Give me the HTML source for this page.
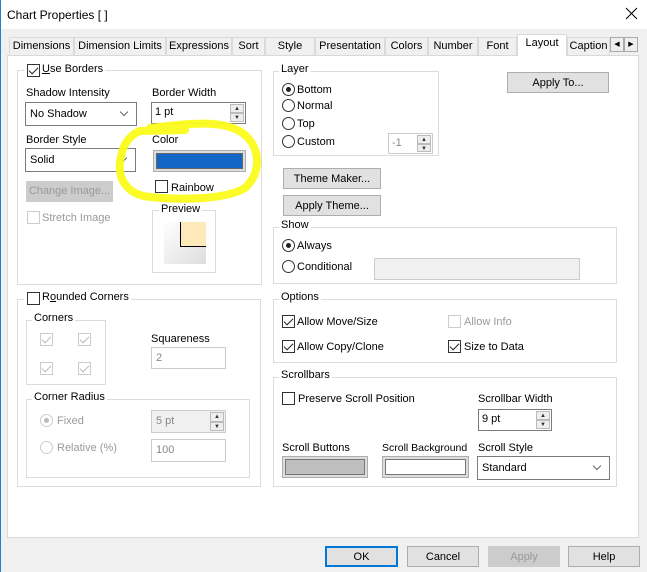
<!DOCTYPE html>
<html><head><meta charset="utf-8"><style>
*{box-sizing:border-box;margin:0;padding:0}
body{width:647px;height:572px;background:#f0f0f0;font-family:"Liberation Sans",sans-serif;font-size:11px;color:#000;position:relative;overflow:hidden}
.a{position:absolute;white-space:nowrap}
.t{padding-top:2px}
.grp{position:absolute;border:1px solid #dcdcdc}
.lg{position:absolute;background:#fff;padding:0 2px;line-height:13px}
.cb{position:absolute;width:13px;height:13px;border:1px solid #333;background:#fff}
.cb.c::after{content:"";position:absolute;left:3px;top:0px;width:4px;height:8px;border:solid #222;border-width:0 1.2px 1.2px 0;transform:rotate(45deg)}
.cb.d{border-color:#ccc}.cb.d.c::after{border-color:#bbb}
.rd{position:absolute;width:13px;height:13px;border:1px solid #333;border-radius:50%;background:#fff}
.rd.s::after{content:"";position:absolute;left:3px;top:3px;width:5px;height:5px;border-radius:50%;background:#222}
.rd.d{border-color:#ccc}.rd.d.s::after{background:#bbb}
.in{position:absolute;border:1px solid #7a7a7a;background:#fff;padding:3px 4px;line-height:14px;white-space:nowrap}
.in.d{border-color:#ccc;color:#888}
.btn{position:absolute;border:1px solid #adadad;background:#e1e1e1;text-align:center;line-height:19px;white-space:nowrap}
.chev{position:absolute;right:9px;top:6px;width:6px;height:6px;border:solid #666;border-width:0 1px 1px 0;transform:rotate(45deg)}
.spin{position:absolute;right:1px;top:1px;width:14px;bottom:1px;}
.spin i{position:absolute;left:0;width:14px;height:50%;border:1px solid #bbb;background:#eee;font-size:6px;font-style:normal;text-align:center;line-height:8px;color:#333}
.gr{color:#999}
.tab{position:absolute;top:37px;height:18px;border:1px solid #dadada;border-bottom:none;background:#f0f0f0;line-height:17px;text-align:center;font-size:11px;white-space:nowrap}
</style></head><body>
<div class="a" style="left:0;top:0;width:647px;height:29px;background:#fff"></div>
<div class="a" style="left:0;top:0;width:1px;height:572px;background:#2b7bd0"></div>
<div class="a" style="left:7px;top:8px;font-size:12px">Chart Properties [ ]</div>
<svg class="a" style="left:625px;top:7px" width="13" height="13"><path d="M1,1L12,12M12,1L1,12" stroke="#000" stroke-width="1"/></svg>

<div class="tab" style="left:9px;width:65px">Dimensions</div>
<div class="tab" style="left:74px;width:92px">Dimension Limits</div>
<div class="tab" style="left:166px;width:66px">Expressions</div>
<div class="tab" style="left:232px;width:33px">Sort</div>
<div class="tab" style="left:265px;width:50px">Style</div>
<div class="tab" style="left:315px;width:70px">Presentation</div>
<div class="tab" style="left:385px;width:43px">Colors</div>
<div class="tab" style="left:428px;width:50px">Number</div>
<div class="tab" style="left:478px;width:39px">Font</div>
<div class="tab" style="left:517px;top:34px;height:22px;width:50px;background:#fff;z-index:2">Layout</div>
<div class="tab" style="left:567px;width:43px">Caption</div>
<div class="a" style="left:610px;top:37px;width:14px;height:15px;border:1px solid #aaa;background:#eee;font-size:7px;text-align:center;line-height:13px">◀</div>
<div class="a" style="left:624px;top:37px;width:14px;height:15px;border:1px solid #aaa;background:#eee;font-size:7px;text-align:center;line-height:13px">▶</div>

<div class="a" style="left:7px;top:55px;width:632px;height:483px;background:#fff;border:1px solid #d9d9d9"></div>

<!-- Use Borders -->
<div class="grp" style="left:17px;top:70px;width:245px;height:215px"></div>
<div class="lg t" style="left:24px;top:63px;padding-left:18px"><u>U</u>se Borders</div>
<div class="cb c" style="left:27px;top:64px"></div>
<div class="a t" style="left:26px;top:85px">Shadow Intensity</div>
<div class="in" style="left:25px;top:102px;width:112px;height:24px;line-height:17px">No Shadow<span class="chev"></span></div>
<div class="a t" style="left:152px;top:85px">Border Width</div>
<div class="in" style="left:151px;top:102px;width:95px;height:22px;padding:2px 3px">1 pt<span class="spin"><i style="top:0">▲</i><i style="bottom:0">▼</i></span></div>
<div class="a t" style="left:26px;top:132px">Border Style</div>
<div class="in" style="left:25px;top:148px;width:111px;height:24px;line-height:17px">Solid<span class="chev"></span></div>
<div class="a" style="left:153px;top:150px;width:93px;height:22px;border:1px solid #adadad;background:#ddd;padding:2px"><div style="width:100%;height:100%;background:#1466c6;border:1px solid #666"></div></div>
<div class="btn gr" style="left:26px;top:181px;width:87px;height:21px;background:#ccc;border-color:#ccc">Change Image...</div>
<div class="cb d" style="left:27px;top:211px"></div>
<div class="a gr t" style="left:42px;top:210px">Stretch Image</div>
<div class="grp" style="left:152px;top:210px;width:64px;height:63px"></div>
<div class="lg t" style="left:159px;top:203px">Preview</div>
<div class="a" style="left:164px;top:222px;width:42px;height:42px;background:linear-gradient(135deg,#fff 0%,#ddd 100%)"></div>
<div class="a" style="left:180px;top:222px;width:26px;height:25px;background:#fde9b9;border-left:1px solid #000;border-bottom:1px solid #000"></div>

<!-- Rounded -->
<div class="grp" style="left:17px;top:299px;width:244px;height:188px"></div>
<div class="lg t" style="left:24px;top:291px;padding-left:18px">R<u>o</u>unded Corners</div>
<div class="cb" style="left:27px;top:292px"></div>
<div class="grp" style="left:26px;top:320px;width:80px;height:65px"></div>
<div class="lg t" style="left:32px;top:312px">Corners</div>
<div class="cb d c" style="left:40px;top:333px"></div><div class="cb d c" style="left:78px;top:333px"></div>
<div class="cb d c" style="left:40px;top:362px"></div><div class="cb d c" style="left:78px;top:362px"></div>
<div class="a t" style="left:151px;top:331px">Squareness</div>
<div class="in d" style="left:151px;top:347px;width:75px;height:22px">2</div>
<div class="grp" style="left:26px;top:399px;width:224px;height:79px"></div>
<div class="lg t" style="left:32px;top:391px">Corner Radius</div>
<div class="rd d s" style="left:40px;top:414px"></div><div class="a gr t" style="left:57px;top:413px">Fixed</div>
<div class="rd d" style="left:40px;top:441px"></div><div class="a gr t" style="left:57px;top:440px">Relative (%)</div>
<div class="in d" style="left:151px;top:410px;width:75px;height:23px;background:#f0f0f0">5 pt<span class="spin"><i style="top:0">▲</i><i style="bottom:0">▼</i></span></div>
<div class="in d" style="left:151px;top:439px;width:75px;height:23px">100</div>

<!-- Layer -->
<div class="grp" style="left:273px;top:71px;width:166px;height:85px"></div>
<div class="lg t" style="left:279px;top:63px">Layer</div>
<div class="rd s" style="left:282px;top:83px"></div><div class="a t" style="left:297px;top:82px">Bottom</div>
<div class="rd" style="left:282px;top:99px"></div><div class="a t" style="left:297px;top:98px">Normal</div>
<div class="rd" style="left:282px;top:117px"></div><div class="a t" style="left:297px;top:116px">Top</div>
<div class="rd" style="left:282px;top:135px"></div><div class="a t" style="left:297px;top:134px">Custom</div>
<div class="in d" style="left:388px;top:133px;width:45px;height:21px;padding:2px 3px">-1<span class="spin"><i style="top:0">▲</i><i style="bottom:0">▼</i></span></div>
<div class="btn" style="left:507px;top:72px;width:102px;height:21px;line-height:20px">Apply To...</div>
<div class="btn" style="left:283px;top:168px;width:98px;height:21px;line-height:20px">Theme Maker...</div>
<div class="btn" style="left:283px;top:195px;width:98px;height:21px;line-height:20px">Apply Theme...</div>

<div class="grp" style="left:273px;top:227px;width:344px;height:57px"></div>
<div class="lg t" style="left:279px;top:219px">Show</div>
<div class="rd s" style="left:282px;top:239px"></div><div class="a t" style="left:297px;top:238px">Always</div>
<div class="rd" style="left:282px;top:260px"></div><div class="a t" style="left:297px;top:259px">Conditional</div>
<div class="a" style="left:374px;top:258px;width:206px;height:22px;background:#f0f0f0;border:1px solid #ccc"></div>

<div class="grp" style="left:273px;top:299px;width:344px;height:64px"></div>
<div class="lg t" style="left:279px;top:291px">Options</div>
<div class="cb c" style="left:282px;top:315px"></div><div class="a t" style="left:297px;top:314px">Allow Move/Size</div>
<div class="cb c" style="left:282px;top:340px"></div><div class="a t" style="left:297px;top:339px">Allow Copy/Clone</div>
<div class="cb d" style="left:448px;top:315px"></div><div class="a gr t" style="left:464px;top:314px">Allow Info</div>
<div class="cb c" style="left:448px;top:340px"></div><div class="a t" style="left:464px;top:339px">Size to Data</div>

<div class="grp" style="left:273px;top:377px;width:344px;height:110px"></div>
<div class="lg t" style="left:279px;top:369px">Scrollbars</div>
<div class="cb" style="left:282px;top:392px"></div><div class="a t" style="left:298px;top:391px">Preserve Scroll Position</div>
<div class="a t" style="left:478px;top:391px">Scrollbar Width</div>
<div class="in" style="left:478px;top:409px;width:74px;height:22px;padding:2px 3px">9 pt<span class="spin"><i style="top:0">▲</i><i style="bottom:0">▼</i></span></div>
<div class="a t" style="left:282px;top:440px">Scroll Buttons</div>
<div class="a t" style="left:382px;top:440px;font-size:10.5px">Scroll Background</div>
<div class="a t" style="left:478px;top:440px">Scroll Style</div>
<div class="a" style="left:282px;top:456px;width:86px;height:22px;border:1px solid #adadad;background:#ddd;padding:2px"><div style="width:100%;height:100%;background:#bfbfbf;border:1px solid #777"></div></div>
<div class="a" style="left:382px;top:456px;width:87px;height:22px;border:1px solid #adadad;background:#ddd;padding:2px"><div style="width:100%;height:100%;background:#fff;border:1px solid #777"></div></div>
<div class="in" style="left:477px;top:456px;width:133px;height:24px;line-height:17px">Standard<span class="chev"></span></div>

<div class="btn" style="left:325px;top:546px;width:73px;height:21px;border:2px solid #0078d7;line-height:18px">OK</div>
<div class="btn" style="left:407px;top:546px;width:72px;height:21px;line-height:20px">Cancel</div>
<div class="btn gr" style="left:488px;top:546px;width:72px;height:21px;line-height:20px;background:#ccc;border-color:#ccc">Apply</div>
<div class="btn" style="left:568px;top:546px;width:72px;height:21px;line-height:20px">Help</div>

<svg class="a" style="left:0;top:0" width="647" height="572"><path d="M150,128 C185,124 225,118 245,135 C262,150 260,175 245,188 C225,200 180,200 150,197 C128,195 118,180 120,162 C122,146 128,136 140,131 L185,130" fill="none" stroke="#fbfb1c" stroke-width="8" stroke-linecap="round" opacity="0.95"/></svg>
<div class="a t" style="left:152px;top:132px;z-index:3">Color</div>
<div class="cb" style="left:155px;top:180px;z-index:3"></div>
<div class="a t" style="left:171px;top:180px;z-index:3">Rainbow</div>
</body></html>
